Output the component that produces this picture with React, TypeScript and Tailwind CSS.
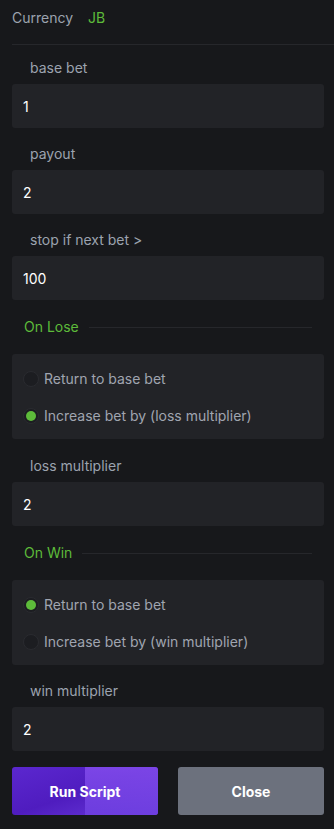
import React from "react";

function Field({ label, value }: { label: string; value: string }) {
  return (
    <div className="flex flex-col">
      <div className="pl-[18px] h-5 leading-5 text-[14px] text-[#9ca3af]">{label}</div>
      <div className="mt-[6px] h-[44px] rounded-[3px] bg-[#222327] px-[11px] flex items-center text-[14px] text-white">
        {value}
      </div>
    </div>
  );
}

function Header({ label }: { label: string }) {
  return (
    <div className="flex items-center h-5 pl-[12px] pr-[12px]">
      <span className="text-[14px] leading-5 text-[#5dbb3a]">{label}</span>
      <div className="ml-[10px] flex-1 h-px bg-[#26272b]" />
    </div>
  );
}

function Radio({ checked, label }: { checked: boolean; label: string }) {
  return (
    <div className="flex items-center h-5">
      <div className="w-4 h-4 rounded-full bg-[#1c1d21] border border-[#2a2b30] flex items-center justify-center">
        {checked && <div className="w-[10px] h-[10px] rounded-full bg-[#5dbb3a]" />}
      </div>
      <span className="ml-[5px] text-[14px] leading-5 text-[#a0a5b0]">{label}</span>
    </div>
  );
}

function RadioBox({ items }: { items: { label: string; checked: boolean }[] }) {
  return (
    <div className="rounded-[3px] bg-[#222327] pl-[11px] pt-[15px] pb-[13px] flex flex-col gap-[17px]">
      {items.map((it) => (
        <Radio key={it.label} checked={it.checked} label={it.label} />
      ))}
    </div>
  );
}

export default function App() {
  return (
    <div
      className="min-h-screen w-full bg-[#17181b] pl-[12px]"
      style={{ fontFamily: "Inter, 'Noto Sans', sans-serif" }}
    >
      <div className="h-[45px] flex items-start pt-[8px] border-b border-[#26272b]">
        <span className="text-[14px] leading-5 text-[#9ca3af]">Currency</span>
        <span className="ml-[15px] text-[14px] leading-5 text-[#5dbb3a]">JB</span>
      </div>
      <div className="pr-[10px] pt-[13px] flex flex-col">
        <Field label="base bet" value="1" />
        <div className="h-4" />
        <Field label="payout" value="2" />
        <div className="h-4" />
        <Field label="stop if next bet >" value="100" />
        <div className="h-[17px]" />
        <Header label="On Lose" />
        <div className="h-[17px]" />
        <RadioBox
          items={[
            { label: "Return to base bet", checked: false },
            { label: "Increase bet by (loss multiplier)", checked: true },
          ]}
        />
        <div className="h-[17px]" />
        <Field label="loss multiplier" value="2" />
        <div className="h-[17px]" />
        <Header label="On Win" />
        <div className="h-[17px]" />
        <RadioBox
          items={[
            { label: "Return to base bet", checked: true },
            { label: "Increase bet by (win multiplier)", checked: false },
          ]}
        />
        <div className="h-4" />
        <Field label="win multiplier" value="2" />
        <div className="mt-4 flex gap-5">
          <button className="relative flex-1 h-12 rounded-[3px] overflow-hidden bg-gradient-to-br from-[#5b27cf] via-[#4f1cbf] to-[#6a38dc] text-white text-[14px] font-bold">
            <div className="absolute inset-y-0 left-[73px] right-0 bg-gradient-to-b from-[#8049ea] to-[#6e3fe0] opacity-90" />
            <span className="relative">Run Script</span>
          </button>
          <button className="flex-1 h-12 rounded-[3px] bg-[#6c717d] text-white text-[14px] font-bold">
            Close
          </button>
        </div>
      </div>
    </div>
  );
}
